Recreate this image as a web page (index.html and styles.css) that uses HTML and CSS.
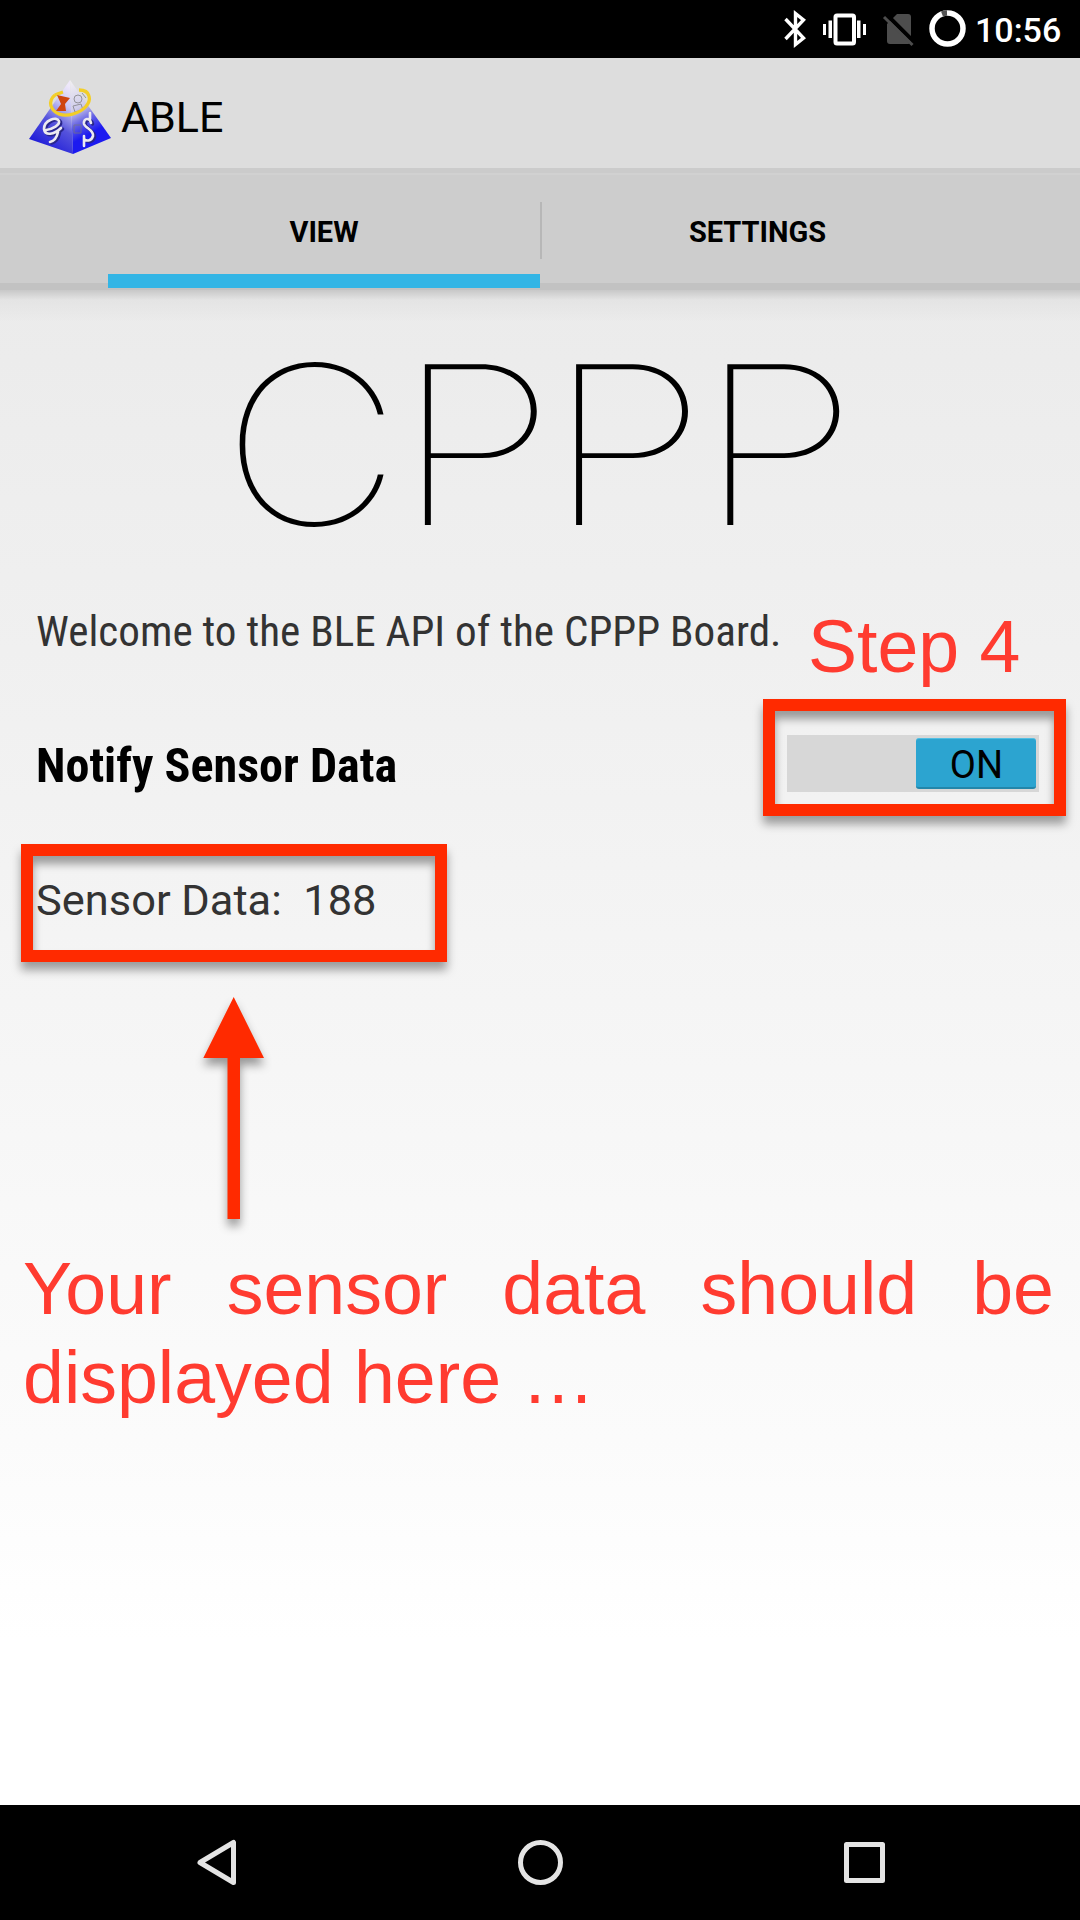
FILE: index.html
```html
<!DOCTYPE html>
<html lang="en">
<head>
<meta charset="utf-8">
<title>ABLE</title>
<link rel="stylesheet" href="styles.css">
</head>
<body>
<div class="screen">
  <header class="status">
    <svg class="status-icons" width="210" height="58" viewBox="760 0 210 58">
      <path d="M785.500 19 L803.500 38 L795.500 44.500 V13.500 L803.500 20 L785.500 39" fill="none" stroke="#fff" stroke-width="3.400"/>
      <g fill="#fff"><rect x="823" y="24" width="3" height="11"/><rect x="828.500" y="20.500" width="3.500" height="17.500"/><rect x="857" y="20.500" width="3.500" height="17.500"/><rect x="863" y="24" width="3" height="11"/></g>
      <rect x="835.500" y="15.500" width="18.500" height="28" rx="1.500" fill="none" stroke="#fff" stroke-width="4"/>
      <path d="M897 14 H908 Q911 14 911 17 V41 Q911 44 908 44 H890 Q887 44 887 41 V24 Z" fill="#4d4d4d"/>
      <path d="M885 13 L915 43" stroke="#000" stroke-width="4"/>
      <path d="M884 17 L912.500 45" stroke="#4d4d4d" stroke-width="3"/>
      <circle cx="947.500" cy="28.500" r="15.500" fill="none" stroke="#fff" stroke-width="5.500"/>
      <path d="M942 14 A15.500 15.500 0 0 1 947 13" fill="none" stroke="#555" stroke-width="5.500"/>
    </svg>
    <span class="clock">10:56</span>
  </header>
  <div class="titlebar">
    <svg class="logo" width="82" height="76" viewBox="0 0 82 76">
      <defs>
        <linearGradient id="left" x1="0.300" y1="1" x2="0.700" y2="0"><stop offset="0" stop-color="#1512d8"/><stop offset="0.450" stop-color="#5553dc"/><stop offset="0.750" stop-color="#c9c6f4"/><stop offset="1" stop-color="#eee8fa"/></linearGradient>
        <linearGradient id="right" x1="0" y1="0" x2="0.300" y2="1"><stop offset="0" stop-color="#f2f0f2"/><stop offset="0.400" stop-color="#cfccea"/><stop offset="0.600" stop-color="#6663e4"/><stop offset="0.800" stop-color="#1c1af0"/></linearGradient>
      </defs>
      <path d="M41 1 L0 60 L44 75 Z" fill="url(#left)"/>
      <path d="M41 1 L82 59 L44 75 Z" fill="url(#right)"/>
      <g fill="none" stroke="#777" stroke-width="1" opacity="0.700"><circle cx="49" cy="20" r="4"/><path d="M44 27 l8 -2 l2 6 l-8 2 z M45 46 h7 v8 h-7 z M53 14 l4 5"/></g>
      <path d="M26 16 C22 19 21 23 22 27 C25 35 34 38 44 35 C55 32 62 24 60 17 C59 13 55 11 50 11 M34 13 C31 14 28 15 26 16" fill="none" stroke="#f2ce28" stroke-width="3.300"/>
      <path d="M28 16 L41 19 L36 25 L37 32 L27 32 L32 25 Z" fill="#cf4510"/>
      <g fill="none" stroke-linecap="round">
        <g stroke="#29268c" stroke-width="3.500" transform="translate(1.500 1)"><path d="M17 51 C24 50 31 46 30 42 C28 37 15 41 15 50 C16 57 25 56 32 49 M29 53 C28 58 25 62 21 63"/><path d="M62 44 C61 38 54 39 55 45 C56 49 65 51 64 57 C62 63 57 62 55 60"/></g>
        <g stroke="#eceaf0" stroke-width="2.600"><path d="M17 51 C24 50 31 46 30 42 C28 37 15 41 15 50 C16 57 25 56 32 49 M29 53 C28 58 25 62 21 63"/><path d="M62 44 C61 38 54 39 55 45 C56 49 65 51 64 57 C62 63 57 62 55 60 M61 34 L61 41 M55 57 L55 67"/></g>
      </g>
    </svg>
    <h1 class="title">ABLE</h1>
  </div>
  <nav class="tabs">
    <div class="tab active"><span>VIEW</span></div>
    <div class="tab"><span>SETTINGS</span></div>
  </nav>
  <main class="content">
    <div class="brand"><span class="initial">C</span>PPP</div>
    <div class="welcome-row">
      <p class="welcome">Welcome to the BLE API of the CPPP Board.</p>
      <span class="step">Step 4</span>
    </div>
    <div class="notify-row">
      <h2 class="notify">Notify Sensor Data</h2>
      <div class="callout callout-switch"><div class="switch"><div class="thumb"><span>ON</span></div></div></div>
    </div>
    <div class="callout callout-data"><span class="data">Sensor Data:&nbsp; 188</span></div>
    <svg class="arrow" width="80" height="240" viewBox="194 990 80 240">
      <path d="M233.700 997 L264 1058 H240 V1219 H227.500 V1058 H203.300 Z" fill="#ff2a00"/>
    </svg>
    <p class="note">Your sensor data should be displayed here …</p>
  </main>
  <footer class="navbar">
    <svg width="1080" height="115" viewBox="0 1805 1080 115" fill="none" stroke="#e4e4e4" stroke-width="5" stroke-linejoin="round">
      <path d="M233.500 1842.500 V1882.500 L200 1862.500 Z"/>
      <circle cx="540.500" cy="1862.500" r="20"/>
      <rect x="846.500" y="1844.500" width="36" height="36"/>
    </svg>
  </footer>
</div>
</body>
</html>
```
FILE: styles.css
```css
* { box-sizing: border-box; margin: 0; padding: 0; }
body { width: 1080px; height: 1920px; overflow: hidden; font-family: Roboto, "Liberation Sans", sans-serif; color: #000; white-space: nowrap; }
.screen { display: flex; flex-direction: column; width: 1080px; height: 1920px; }

.status { height: 58px; background: #000; display: flex; justify-content: flex-end; padding-right: 17px; }
.clock { width: 93px; padding-left: 5px; color: #fff; font-size: 34px; font-weight: 500; line-height: 60px; }

.titlebar { height: 110px; background: #ddd; display: flex; padding-left: 29px; }
.logo { margin-top: 21px; }
.title { margin-left: 10px; font-size: 43px; font-weight: 400; line-height: 118px; }

.tabs { height: 122px; padding: 0 108px; display: flex; background: linear-gradient(#cbcbcb 0 5px, #d1d1d1 5px 7px, #cdcdcd 7px 115px, #c2c2c2 115px); }
.tab { width: 432px; height: 120px; text-align: center; font-size: 29px; font-weight: 700; line-height: 129px; }
.tab.active { border-bottom: 14px solid #33b5e5; }
.tab + .tab { padding-left: 3px; background: linear-gradient(#b7b7b7, #b7b7b7) 0 34px / 2px 57px no-repeat; }

.content { flex: 1; display: flex; flex-direction: column; align-items: flex-start; background: linear-gradient(#c8c8c8, rgba(225,225,225,.7) 10px, rgba(235,235,235,0) 32px), linear-gradient(#ebebeb, #eee 210px, #f2f2f2 510px, #f9f9f9 980px, #fbfbfb 1150px, #fff 1350px); }
.brand { align-self: center; height: 290px; margin-top: 15px; font-family: Inter, Roboto, sans-serif; font-size: 221px; font-weight: 100; line-height: 279px; letter-spacing: -8px; transform: translateX(-5px) scaleX(1.2); }
.initial { display: inline-block; letter-spacing: -15.5px; transform: scaleX(.935); transform-origin: 0 50%; }
.welcome-row { display: flex; height: 94px; width: 100%; padding-left: 36px; }
.welcome { width: 774px; font-size: 43.15px; line-height: 74px; color: #333; font-stretch: 75%; }
.step { margin-left: -2px; font-family: "Liberation Sans", Arial, sans-serif; font-size: 73.5px; line-height: 104px; color: #ff3b30; }
.notify-row { display: flex; height: 155px; padding-left: 36px; }
.notify { width: 727px; font-size: 48.1px; line-height: 153px; font-stretch: 75%; }
.callout { border: 12px solid #ff2a00; box-shadow: 0 8px 9px rgba(0,0,0,.36), inset 0 8px 9px rgba(0,0,0,.36); }
.callout-switch { width: 303px; height: 117px; margin-top: 10px; padding: 24px 0 0 12px; }
.switch { width: 252px; height: 57px; padding: 3px; display: flex; justify-content: flex-end; background: #d7d7d7; }
.thumb { width: 120px; height: 51px; border-radius: 3px; background: #2ca4d0; border-top: 1px solid #52bfe3; border-bottom: 2px solid #2386aa; text-align: center; font-size: 38px; line-height: 52px; padding-left: 1px; }
.callout-data { width: 426px; height: 118px; margin-left: 21px; padding-left: 3px; }
.data { font-size: 43.4px; line-height: 89px; color: #333; }
.arrow { margin: 28px 0 0 194px; filter: drop-shadow(0 7px 5px rgba(0,0,0,.38)); }
.note { width: 1031px; margin: 14px 0 0 23px; white-space: normal; text-align: justify; font-family: "Liberation Sans", Arial, sans-serif; font-size: 73.5px; line-height: 89px; color: #ff3b30; }

.navbar { height: 115px; background: #000; }
.navbar svg { display: block; }
```
